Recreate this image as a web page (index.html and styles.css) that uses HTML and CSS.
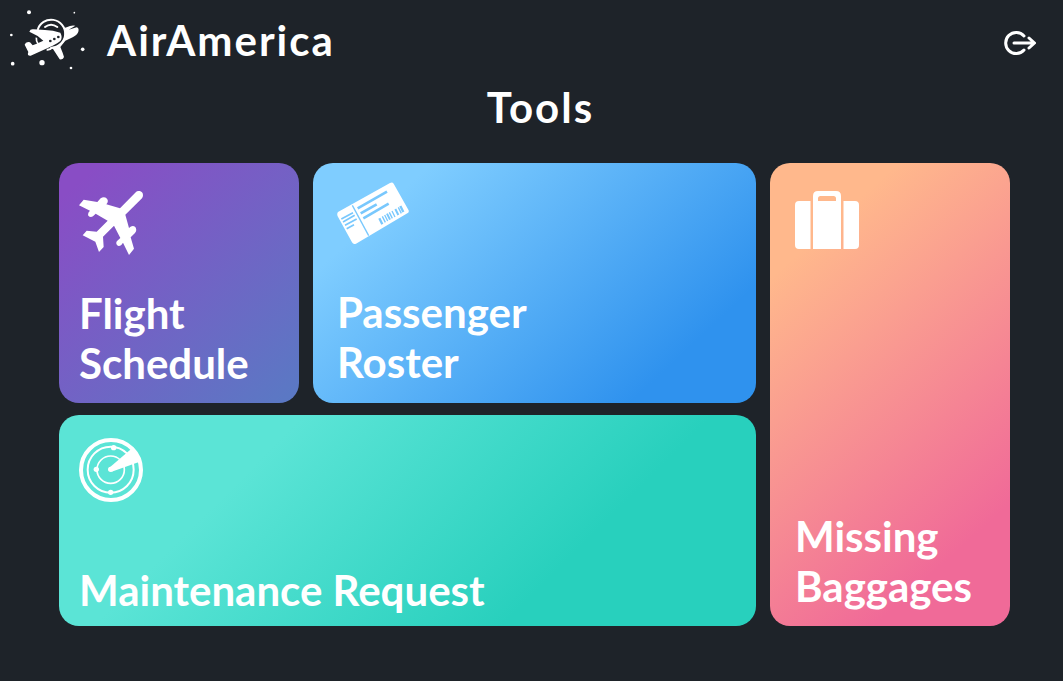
FILE: index.html
```html
<!DOCTYPE html>
<html lang="en">
<head>
<meta charset="utf-8">
<title>AirAmerica – Tools</title>
<meta name="viewport" content="width=device-width, initial-scale=1">
<link rel="stylesheet" href="styles.css">
</head>
<body>
<header class="topbar">
  <a class="brand" href="#">
    <svg class="brand-logo" viewBox="21 21 243 195" aria-hidden="true">
      <g fill="#fff">
        <circle cx="87" cy="37" r="6"/><circle cx="223" cy="38" r="2.5"/><circle cx="34" cy="105" r="4"/>
        <circle cx="38" cy="191" r="5.5"/><circle cx="126" cy="188" r="8"/><circle cx="213" cy="204" r="4"/><circle cx="248" cy="148" r="5.5"/>
        <path d="M190 85L200 82Q214 74 226 77L206 89L230 82Q238 84 235 95Q232 104 218 112L196 122L181 141Q189 160 192 171Q190 180 179 178L159 147L150 144Z"/>
      </g>
      <circle cx="154" cy="101" r="40" fill="#1e2329"/>
      <path d="M113 90A42 42 0 1 1 156 143Q151 150 140 149" fill="none" stroke="#fff" stroke-width="6"/>
      <path d="M88 95Q91 86 101 88L135 90Q160 91 181 98Q189 113 181 123Q172 131 158 137L92 167Q80 168 85 156L74 134Q77 124 90 127L98 136L110 131L130 122L113 108Z" fill="#fff"/>
      <path d="M109 113Q108 123 114 131" fill="none" stroke="#fff" stroke-width="5"/>
      <path d="M135 81Q153 67 172 81" fill="none" stroke="#fff" stroke-width="6" stroke-linecap="round"/>
      <g fill="#1e2329"><circle cx="151" cy="123" r="4"/><circle cx="163" cy="117" r="4"/><circle cx="175" cy="111" r="4"/></g>
    </svg>
    <span class="brand-name">AirAmerica</span>
  </a>
  <button class="logout" type="button" aria-label="Log out">
    <svg viewBox="0 0 32 26" aria-hidden="true" fill="none" stroke="#fff" stroke-width="3" stroke-linecap="round" stroke-linejoin="round">
      <path d="M20 6A10.500 10.500 0 1 0 20 20M10 13H30M25 8L30.500 13L25 18"/>
    </svg>
  </button>
</header>
<main class="page">
  <h1 class="title">Tools</h1>
  <nav class="tools" aria-label="Tools">
    <a class="card card-flight" href="#">
      <svg class="icon" viewBox="57 48 192 192" aria-hidden="true" fill="#fff">
        <path d="M57 91L71 74L112 81L122 70Q132 63 141 71Q147 79 139 88L180 100L228 51Q238 44 246 52Q252 60 246 70L196 119L207 159Q217 149 226 156Q232 166 225 174L212 187L222 221L207 240L189 203L184 210Q176 216 171 210Q166 203 172 197L181 189L162 152L129 185L131 216L117 231L106 200L68 181L80 167L110 170L143 137L107 116L99 124Q91 129 85 122Q82 114 90 107Z"/>
      </svg>
      <span class="label">Flight Schedule</span>
    </a>
    <a class="card card-roster" href="#">
      <svg class="icon icon-ticket" viewBox="51 38 216 189" aria-hidden="true">
        <path d="M54 128L210 41Q217 37 221 43L265 121Q269 128 262 132L108 223Q100 227 96 219L53 141Q50 133 54 128Z" fill="#fff"/>
        <g fill="none" stroke="#79c8fd">
          <path d="M97 108L146 199" stroke-width="4"/>
          <path d="M113 117L201 67M122 132L170 105M130 147L206 103" stroke-width="8"/>
          <path d="M64 149L99 130M69 158L104 138M75 168L110 149M80 178L102 166" stroke-width="5"/>
          <path d="M178 147L187 165M241 110L250 128" stroke-width="7"/>
          <path d="M187 141L196 159M194 137L203 155M208 129L217 147M216 125L225 143M235 114L244 132" stroke-width="4"/>
          <path d="M201 133L210 151M226 119L235 137" stroke-width="6"/>
        </g>
      </svg>
      <span class="label">Passenger Roster</span>
    </a>
    <a class="card card-baggage" href="#">
      <svg class="icon icon-case" viewBox="0 0 64 58" aria-hidden="true" fill="#fff">
        <path d="M15.500 10V58H4Q0 58 0 54V14Q0 10 4 10ZM48.500 10V58H60Q64 58 64 54V14Q64 10 60 10Z"/>
        <path fill-rule="evenodd" d="M18 58V5Q18 0 23 0H41Q46 0 46 5V58ZM23 10H41V7.500Q41 5 38.500 5H25.500Q23 5 23 7.500Z"/>
      </svg>
      <span class="label">Missing Baggages</span>
    </a>
    <a class="card card-maintenance" href="#">
      <svg class="icon" viewBox="42 39 192 192" aria-hidden="true">
        <g fill="none" stroke="#fff">
          <circle cx="138" cy="135" r="90" stroke-width="12"/>
          <circle cx="137" cy="134" r="69" stroke-width="6"/>
          <circle cx="137" cy="134" r="41" stroke-width="5"/>
        </g>
        <path d="M132 129L202 69Q219 89 222 111L140 140Z" fill="#fff"/>
        <g fill="#fff"><circle cx="137" cy="133" r="8"/><circle cx="146" cy="68" r="8"/><circle cx="94" cy="133" r="8"/><circle cx="137" cy="202" r="8"/></g>
      </svg>
      <span class="label">Maintenance Request</span>
    </a>
  </nav>
</main>
</body>
</html>
```
FILE: styles.css
```css
* {
  box-sizing: border-box;
}

body {
  margin: 0;
  min-height: 100vh;
  background: #1e2329;
  color: #fff;
  font-family: Lato, "Liberation Sans", sans-serif;
  font-weight: 700;
}

.topbar {
  display: flex;
  align-items: center;
  justify-content: space-between;
  padding: 7px 27px 0 7px;
}

.brand {
  display: flex;
  align-items: center;
  gap: 19px;
  color: inherit;
  text-decoration: none;
}

.brand-logo {
  width: 81px;
  height: 65px;
}

.brand-name,
.title {
  font-size: 42px;
  line-height: 50px;
  letter-spacing: 2px;
}

.logout {
  padding: 6px 0 0;
  border: 0;
  background: none;
  cursor: pointer;
}

.logout svg {
  display: block;
  width: 32px;
  height: 26px;
}

.page {
  padding: 10px 53px 55px 59px;
}

.title {
  margin: 0 0 31px;
  padding-left: 12px;
  font-weight: 700;
  text-align: center;
}

.tools {
  display: grid;
  grid-template-columns: 240px minmax(0, 1fr) 240px;
  grid-template-rows: minmax(240px, auto) minmax(211px, auto);
  grid-template-areas:
    "flight roster baggage"
    "maintenance maintenance baggage";
  gap: 12px 14px;
}

.card {
  display: flex;
  flex-direction: column;
  align-items: flex-start;
  justify-content: space-between;
  border-radius: 20px;
  color: inherit;
  text-decoration: none;
}

.card-flight {
  grid-area: flight;
  padding: 28px 20px 15px;
  background: linear-gradient(137deg, #894dc5 8%, #5b78c4 96%);
}

.card-roster {
  grid-area: roster;
  padding: 19px 24px 16px;
  background: linear-gradient(137deg, #7fcdff 17%, #2f92ee 82%);
}

.card-baggage {
  grid-area: baggage;
  padding: 28px 25px 15px;
  background: linear-gradient(138deg, #ffb88c 17%, #f06a98 82%);
}

.card-maintenance {
  grid-area: maintenance;
  padding: 23px 20px 11px;
  background: linear-gradient(135deg, #5be4d6 27%, #28d0bd 72%);
}

.icon {
  width: 64px;
  height: 64px;
}

.icon-ticket {
  width: 72px;
  height: 63px;
}

.icon-case {
  height: 58px;
}

.label {
  max-width: 200px;
  font-size: 42px;
  line-height: 50px;
}

.card-maintenance .label {
  max-width: none;
}
```
